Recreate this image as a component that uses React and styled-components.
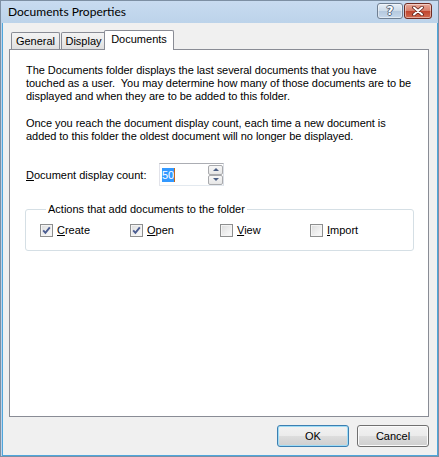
import React from "react";
import styled, { createGlobalStyle } from "styled-components";

const GlobalStyle = createGlobalStyle`
  html, body {
    margin: 0;
    padding: 0;
    background: #ffffff;
  }
  body {
    font-family: "Liberation Sans", Arial, sans-serif;
    font-size: 11px;
    color: #000000;
  }
`;

const Window = styled.div`
  width: 439px;
  height: 457px;
  box-sizing: border-box;
  border: 1px solid #7d8fa3;
  padding-left: 1px;
  background: linear-gradient(#c8dbf0, #bcd3ea 22px, #bcd3ea);
  display: flex;
  flex-direction: column;
`;

const TitleBar = styled.div`
  height: 22px;
  flex: none;
  display: flex;
  align-items: flex-start;
  padding: 0 6px 0 6px;
`;

const Title = styled.div`
  font-family: Lato, "Noto Sans", sans-serif;
  font-size: 12px;
  line-height: 22px;
  color: #000000;
`;

const CaptionButtons = styled.div`
  margin-left: auto;
  margin-top: 2px;
  display: flex;
  gap: 1px;
`;

const CaptionButton = styled.div`
  width: ${p => p.$w}px;
  height: 16px;
  box-sizing: border-box;
  border-radius: 3px;
  border: 1px solid ${p => (p.$danger ? "#6f2b22" : "#6f7f92")};
  background: ${p =>
    p.$danger
      ? "linear-gradient(#e8a898, #d77e6a 50%, #c0442e 50%, #d16a50)"
      : "linear-gradient(#e6eef7, #cddbe9 50%, #b4c8de 50%, #c6d8eb)"};
  box-shadow: inset 0 0 0 1px rgba(255, 255, 255, 0.45);
  display: flex;
  align-items: center;
  justify-content: center;
`;

const HelpGlyph = styled.span`
  font-family: "DejaVu Sans", sans-serif;
  font-weight: bold;
  font-size: 12px;
  line-height: 14px;
  color: #ffffff;
  text-shadow: -1px 0 #56667a, 1px 0 #56667a, 0 -1px #56667a, 0 1px #56667a;
`;

const Client = styled.div`
  flex: 1;
  display: flex;
  flex-direction: column;
  background: #f0f0f0;
  border: 1px solid #4ea6dc;
  border-top: none;
  padding: 7px 8px 8px 6px;
`;

const TabStrip = styled.div`
  display: flex;
  align-items: flex-end;
  height: 19px;
  padding-left: 2px;
  position: relative;
  z-index: 1;
`;

const Tab = styled.div`
  width: ${p => p.$w}px;
  height: ${p => (p.$active ? 20 : 17)}px;
  margin-bottom: ${p => (p.$active ? -1 : 0)}px;
  margin-left: ${p => p.$ml || 0}px;
  box-sizing: border-box;
  border: 1px solid #898c95;
  border-bottom: none;
  border-radius: 2px 2px 0 0;
  background: ${p =>
    p.$active ? "#ffffff" : "linear-gradient(#f3f3f3, #ebebeb 50%, #dedede)"};
  display: flex;
  align-items: center;
  justify-content: center;
  padding-bottom: ${p => (p.$active ? 3 : 0)}px;
`;

const Panel = styled.div`
  height: 368px;
  box-sizing: border-box;
  border: 1px solid #898c95;
  background: #ffffff;
  padding: 14px 16px;
`;

const Para = styled.p`
  margin: 0 0 ${p => p.$mb || 0}px 0;
  line-height: 13px;
  white-space: pre;
  letter-spacing: -0.05px;
`;

const FieldRow = styled.div`
  display: flex;
  align-items: center;
  margin-top: 20px;
`;

const FieldLabel = styled.div`
  width: 133px;
`;

const SpinBox = styled.div`
  width: 65px;
  height: 23px;
  box-sizing: border-box;
  border: 1px solid;
  border-color: #abadb3 #dbdfe6 #e3e9ef #e2e3ea;
  background: #ffffff;
  display: flex;
  align-items: center;
  padding-left: 2px;
`;

const Selected = styled.span`
  background: #3399ff;
  color: #ffffff;
  line-height: 14px;
`;

const Caret = styled.span`
  width: 1px;
  height: 14px;
  background: #c56a1c;
`;

const SpinButtons = styled.div`
  margin-left: auto;
  display: flex;
  flex-direction: column;
`;

const SpinButton = styled.div`
  width: 15px;
  height: 10px;
  box-sizing: border-box;
  border: 1px solid #a9aaad;
  border-radius: 2px;
  background: linear-gradient(#f7f7f7, #e6e6e6);
  display: flex;
  align-items: center;
  justify-content: center;
`;

const Arrow = styled.span`
  width: 0;
  height: 0;
  border-left: 3px solid transparent;
  border-right: 3px solid transparent;
  ${p =>
    p.$up
      ? "border-bottom: 3px solid #4b5e84;"
      : "border-top: 3px solid #4b5e84;"}
`;

const Group = styled.fieldset`
  width: 389px;
  box-sizing: border-box;
  margin: 17px 0 0 -1px;
  padding: 8px 0 13px 14px;
  border: 1px solid #d5dfe5;
  border-radius: 3px;
`;

const Legend = styled.legend`
  margin-left: 6px;
  padding: 0 2px;
  line-height: 13px;
`;

const CheckRow = styled.div`
  display: grid;
  grid-template-columns: repeat(4, 90px);
`;

const CheckItem = styled.label`
  display: flex;
  align-items: center;
  gap: 4px;
  line-height: 13px;
`;

const Box = styled.span`
  width: 13px;
  height: 13px;
  box-sizing: border-box;
  border: 1px solid #8e8f8f;
  background: linear-gradient(135deg, #dcdcdc, #f0f0f0 60%, #fbfbfb);
  box-shadow: inset 0 0 0 1px #f4f4f4;
  display: flex;
`;

const Footer = styled.div`
  display: flex;
  justify-content: flex-end;
  gap: 8px;
  padding-top: 8px;
`;

const Button = styled.div`
  width: 72px;
  height: 22px;
  box-sizing: border-box;
  border-radius: 3px;
  border: 1px solid ${p => (p.$default ? "#3c7fb1" : "#707070")};
  box-shadow: inset 0 0 0 1px ${p => (p.$default ? "#9fdcf6" : "#fbfbfb")};
  background: linear-gradient(#f2f2f2, #ebebeb 50%, #dddddd 50%, #cfcfcf);
  display: flex;
  align-items: center;
  justify-content: center;
`;

function CheckBox({ checked, children }) {
  return (
    <CheckItem>
      <Box>
        {checked && (
          <svg width="11" height="11" viewBox="0 0 11 11">
            <path d="M2.2 5.4 L4.4 7.8 L8.8 2.4" fill="none" stroke="#4a5c91" strokeWidth="1.9" />
          </svg>
        )}
      </Box>
      <span>{children}</span>
    </CheckItem>
  );
}

export default function App() {
  return (
    <>
      <GlobalStyle />
      <Window>
        <TitleBar>
          <Title>Documents Properties</Title>
          <CaptionButtons>
            <CaptionButton $w={26}>
              <HelpGlyph>?</HelpGlyph>
            </CaptionButton>
            <CaptionButton $w={28} $danger>
              <svg width="14" height="10" viewBox="0 0 14 10">
                <path d="M3 1.5 L11 8.5 M11 1.5 L3 8.5" stroke="#5a2019" strokeWidth="3.6" strokeLinecap="round" />
                <path d="M3 1.5 L11 8.5 M11 1.5 L3 8.5" stroke="#ffffff" strokeWidth="2" strokeLinecap="round" />
              </svg>
            </CaptionButton>
          </CaptionButtons>
        </TitleBar>
        <Client>
          <TabStrip>
            <Tab $w={49}>General</Tab>
            <Tab $w={45} $ml={1}>Display</Tab>
            <Tab $w={70} $ml={-2} $active>Documents</Tab>
          </TabStrip>
          <Panel>
            <Para $mb={14}>
              {"The Documents folder displays the last several documents that you have\ntouched as a user.  You may determine how many of those documents are to be\ndisplayed and when they are to be added to this folder."}
            </Para>
            <Para>
              {"Once you reach the document display count, each time a new document is\nadded to this folder the oldest document will no longer be displayed."}
            </Para>
            <FieldRow>
              <FieldLabel>
                <u>D</u>ocument display count:
              </FieldLabel>
              <SpinBox>
                <Selected>50</Selected>
                <Caret />
                <SpinButtons>
                  <SpinButton>
                    <Arrow $up />
                  </SpinButton>
                  <SpinButton>
                    <Arrow />
                  </SpinButton>
                </SpinButtons>
              </SpinBox>
            </FieldRow>
            <Group>
              <Legend>Actions that add documents to the folder</Legend>
              <CheckRow>
                <CheckBox checked>
                  <u>C</u>reate
                </CheckBox>
                <CheckBox checked>
                  <u>O</u>pen
                </CheckBox>
                <CheckBox>
                  <u>V</u>iew
                </CheckBox>
                <CheckBox>
                  <u>I</u>mport
                </CheckBox>
              </CheckRow>
            </Group>
          </Panel>
          <Footer>
            <Button $default>OK</Button>
            <Button>Cancel</Button>
          </Footer>
        </Client>
      </Window>
    </>
  );
}
